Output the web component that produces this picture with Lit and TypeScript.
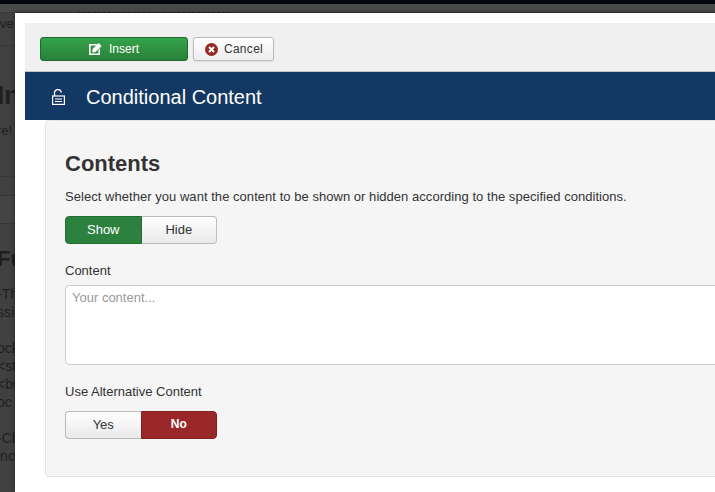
import { LitElement, html, css } from 'lit';
import { customElement } from 'lit/decorators.js';

@customElement('app-root')
export class AppRoot extends LitElement {
  static styles = css`
    :host {
      display: block;
      position: relative;
      width: 715px;
      height: 492px;
      overflow: hidden;
      background: #404040;
      font-family: 'Liberation Sans', Arial, sans-serif;
      font-size: 13px;
      color: #333;
    }

    /* page behind the modal, dimmed */
    .topbar {
      height: 4px;
      background: #05090d;
    }
    .subbar {
      height: 8px;
      background: #4a4a4a;
      border-bottom: 1px solid #3a3a3a;
    }
    .subbar div {
      box-sizing: border-box;
      width: 152px;
      height: 9px;
      margin-left: 78px;
      border-bottom: 1px dashed #222;
    }
    .behind {
      margin-left: -3px;
      color: #1f1f1f;
    }
    .crumbs {
      height: 32px;
      margin-left: 3px;
      line-height: 22px;
      border-bottom: 1px solid #383838;
    }
    .big {
      font-size: 26px;
      font-weight: bold;
      line-height: 28px;
      padding-top: 35px;
    }
    .note {
      margin-top: 13px;
      line-height: 18px;
    }
    .rule {
      height: 36px;
      border-bottom: 1px solid #383838;
    }
    .tab-gap {
      height: 19px;
      box-sizing: border-box;
      border-bottom: 1px solid #383838;
    }
    .tab {
      height: 28px;
      line-height: 27px;
      box-sizing: border-box;
      padding-left: 23px;
      border-bottom: 1px solid #353535;
      background: #444;
    }
    .sub {
      margin-top: 23px;
      font-size: 22px;
      font-weight: bold;
      line-height: 24px;
    }
    .lines {
      margin-top: 14px;
      line-height: 18px;
      font-size: 14px;
    }
    .lines div {
      height: 18px;
    }

    /* modal */
    .modal {
      position: absolute;
      left: 15px;
      top: 13px;
      bottom: 0;
      width: 760px;
      padding: 10px 0 0 10px;
      box-sizing: border-box;
      background: #fff;
      box-shadow: 0 0 4px rgba(0, 0, 0, 0.45);
    }
    .toolbar {
      display: flex;
      gap: 5px;
      height: 49px;
      box-sizing: border-box;
      padding: 14px 15px 0;
      background: #f0f0f0;
      border-bottom: 1px solid #c4c4c4;
    }
    .btn {
      display: flex;
      align-items: center;
      justify-content: center;
      box-sizing: border-box;
      height: 24px;
      border-radius: 3px;
      font-size: 12px;
    }
    .insert {
      width: 148px;
      gap: 7px;
      color: #fff;
      background: linear-gradient(#34a34a, #2a8139);
      border: 1px solid #1f6a2c;
    }
    .cancel {
      width: 81px;
      gap: 6px;
      padding-left: 1px;
      color: #333;
      background: linear-gradient(#fff, #ececec);
      border: 1px solid #bbb;
      box-shadow: 0 1px 2px rgba(0, 0, 0, 0.08);
      letter-spacing: 0.3px;
    }
    .title {
      display: flex;
      align-items: center;
      gap: 21px;
      height: 48px;
      padding: 2px 0 0 27px;
      box-sizing: border-box;
      background: #133863;
      color: #fff;
      font-size: 20px;
    }
    .title svg {
      margin-top: -1px;
    }
    .body {
      padding-left: 20px;
    }
    .panel {
      box-sizing: border-box;
      height: 357px;
      padding: 29px 19px 0;
      background: #f5f5f5;
      border: 1px solid #e3e3e3;
      border-radius: 4px;
    }
    h2 {
      margin: 0;
      font-size: 22px;
      line-height: 28px;
      color: #333;
    }
    .desc {
      margin: 10px 0 0;
      line-height: 18px;
      letter-spacing: 0.04px;
    }
    .toggle {
      display: flex;
      margin-top: 10px;
      width: 152px;
    }
    .toggle span {
      display: flex;
      flex: 1;
      align-items: center;
      justify-content: center;
      box-sizing: border-box;
      height: 28px;
      padding-bottom: 2px;
      border: 1px solid #bbb;
      background: linear-gradient(#fff, #e9e9e9);
      color: #333;
    }
    .toggle span:first-child {
      border-radius: 4px 0 0 4px;
      border-right: 0;
    }
    .toggle span:last-child {
      border-radius: 0 4px 4px 0;
      border-left: 0;
    }
    .toggle span.show {
      background: #2b813d;
      border: 1px solid #226b31;
      color: #fff;
    }
    .toggle span.no {
      background: #9a2828;
      border: 1px solid #7e2020;
      color: #fff;
      font-weight: bold;
      font-size: 12px;
    }
    label {
      display: block;
      margin-top: 18px;
      line-height: 18px;
    }
    .area {
      box-sizing: border-box;
      height: 80px;
      margin-top: 5px;
      padding: 3px 6px;
      background: #fff;
      border: 1px solid #ccc;
      border-radius: 4px;
      color: #999;
      line-height: 18px;
    }
    .alt {
      margin-top: 18px;
    }
    .alt + .toggle {
      margin-top: 10px;
    }
    svg {
      display: block;
      flex: none;
    }
  `;

  render() {
    return html`
      <div class="topbar"></div>
      <div class="subbar"><div></div></div>
      <div class="behind">
        <div class="crumbs">ve</div>
        <div class="big">In</div>
        <div class="note">re!</div>
        <div class="rule"></div>
        <div class="tab-gap"></div>
        <div class="tab">C</div>
        <div class="sub">Fu</div>
        <div class="lines">
          <div>-Th</div>
          <div>ssi</div>
          <div></div>
          <div>ock</div>
          <div>&lt;st</div>
          <div>&lt;br</div>
          <div>oc</div>
          <div></div>
          <div>-Ch</div>
          <div>inc</div>
        </div>
      </div>

      <div class="modal">
        <div class="toolbar">
          <div class="btn insert">
            <svg width="13" height="12" viewBox="0 0 13 12">
              <path fill="#fff" d="M0 1h8.5L7 2.6H1.6v7.8h7.8V7L11 5.4V12H0z" />
              <path fill="#fff" d="M3.6 6 9.6 0 12.6 3 6.6 9l-3.4.4z" />
            </svg>
            Insert
          </div>
          <div class="btn cancel">
            <svg width="13" height="13" viewBox="0 0 13 13">
              <circle cx="6.5" cy="6.5" r="6.5" fill="#942a25" />
              <path stroke="#fff" stroke-width="2" d="M4 4l5 5M9 4l-5 5" />
            </svg>
            Cancel
          </div>
        </div>
        <div class="title">
          <svg width="13" height="16" viewBox="0 0 13 16">
            <path fill="none" stroke="#fff" stroke-width="1.3" d="M2.5 7V4.2a3.4 3.4 0 0 1 6.8-.6" />
            <rect x="0.6" y="7" width="11.8" height="8.4" fill="none" stroke="#fff" stroke-width="1.2" />
            <path stroke="#fff" d="M3 10h7M3 12.5h7" />
          </svg>
          Conditional Content
        </div>
        <div class="body">
          <div class="panel">
            <h2>Contents</h2>
            <p class="desc">Select whether you want the content to be shown or hidden according to the specified conditions.</p>
            <div class="toggle"><span class="show">Show</span><span>Hide</span></div>
            <label>Content</label>
            <div class="area">Your content...</div>
            <label class="alt">Use Alternative Content</label>
            <div class="toggle"><span>Yes</span><span class="no">No</span></div>
          </div>
        </div>
      </div>
    `;
  }
}
